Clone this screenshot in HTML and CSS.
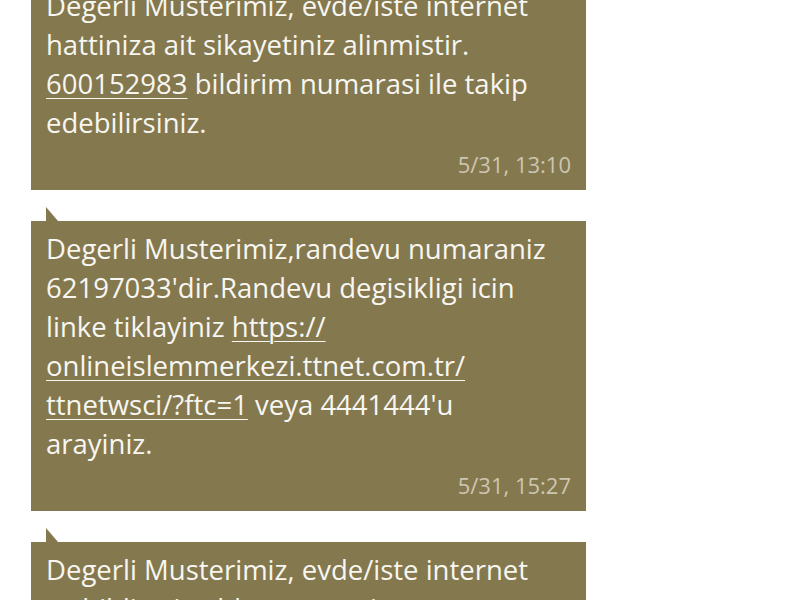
FILE: index.html
```html
<!DOCTYPE html>
<html lang="tr">
<head>
    <meta charset="UTF-8">
    <title>Mesajlar</title>
    <link rel="stylesheet" href="styles.css">
</head>
<body>
    <div class="thread">
        <div class="message">
            <div class="bubble">
                <p class="text">Degerli Musterimiz, evde/iste internet hattiniza ait sikayetiniz alinmistir. <a href="#">600152983</a> bildirim numarasi ile takip edebilirsiniz.</p>
                <div class="time">5/31, 13:10</div>
            </div>
        </div>

        <div class="message">
            <div class="tail"></div>
            <div class="bubble">
                <p class="text">Degerli Musterimiz,randevu numaraniz 62197033'dir.Randevu degisikligi icin linke tiklayiniz <a href="#">https://<br>onlineislemmerkezi.ttnet.com.tr/<br>ttnetwsci/?ftc=1</a> veya 4441444'u arayiniz.</p>
                <div class="time">5/31, 15:27</div>
            </div>
        </div>

        <div class="message">
            <div class="tail"></div>
            <div class="bubble">
                <p class="text">Degerli Musterimiz, evde/iste internet ve bildirmis oldugunuz ariza giderilmistir.</p>
                <div class="time">6/1, 10:02</div>
            </div>
        </div>
    </div>
</body>
</html>
```

FILE: styles.css
```css
body {
    margin: 0;
    background-color: #fff;
    font-family: 'Open Sans', 'Noto Sans', sans-serif;
    overflow: hidden;
    height: 600px;
}
.thread {
    width: 555px;
    margin-left: 31px;
    margin-top: -22px;
    display: flex;
    flex-direction: column;
}
.message {
    margin-bottom: 17px;
}
.tail {
    width: 0;
    height: 0;
    margin-left: 15px;
    border-right: 12px solid transparent;
    border-bottom: 14px solid #84784f;
}
.bubble {
    background-color: #84784f;
    padding: 8px 31px 11px 15px;
    color: #f8f6f0;
}
.text {
    margin: 0;
    font-size: 27.5px;
    line-height: 39px;
}
.text a {
    color: #f8f6f0;
    text-decoration: underline;
    text-decoration-thickness: 1px;
    text-underline-offset: 4px;
}
.time {
    text-align: right;
    font-size: 22px;
    line-height: 30px;
    margin-top: 7px;
    margin-right: -16px;
    color: #cdc6b0;
}
```
